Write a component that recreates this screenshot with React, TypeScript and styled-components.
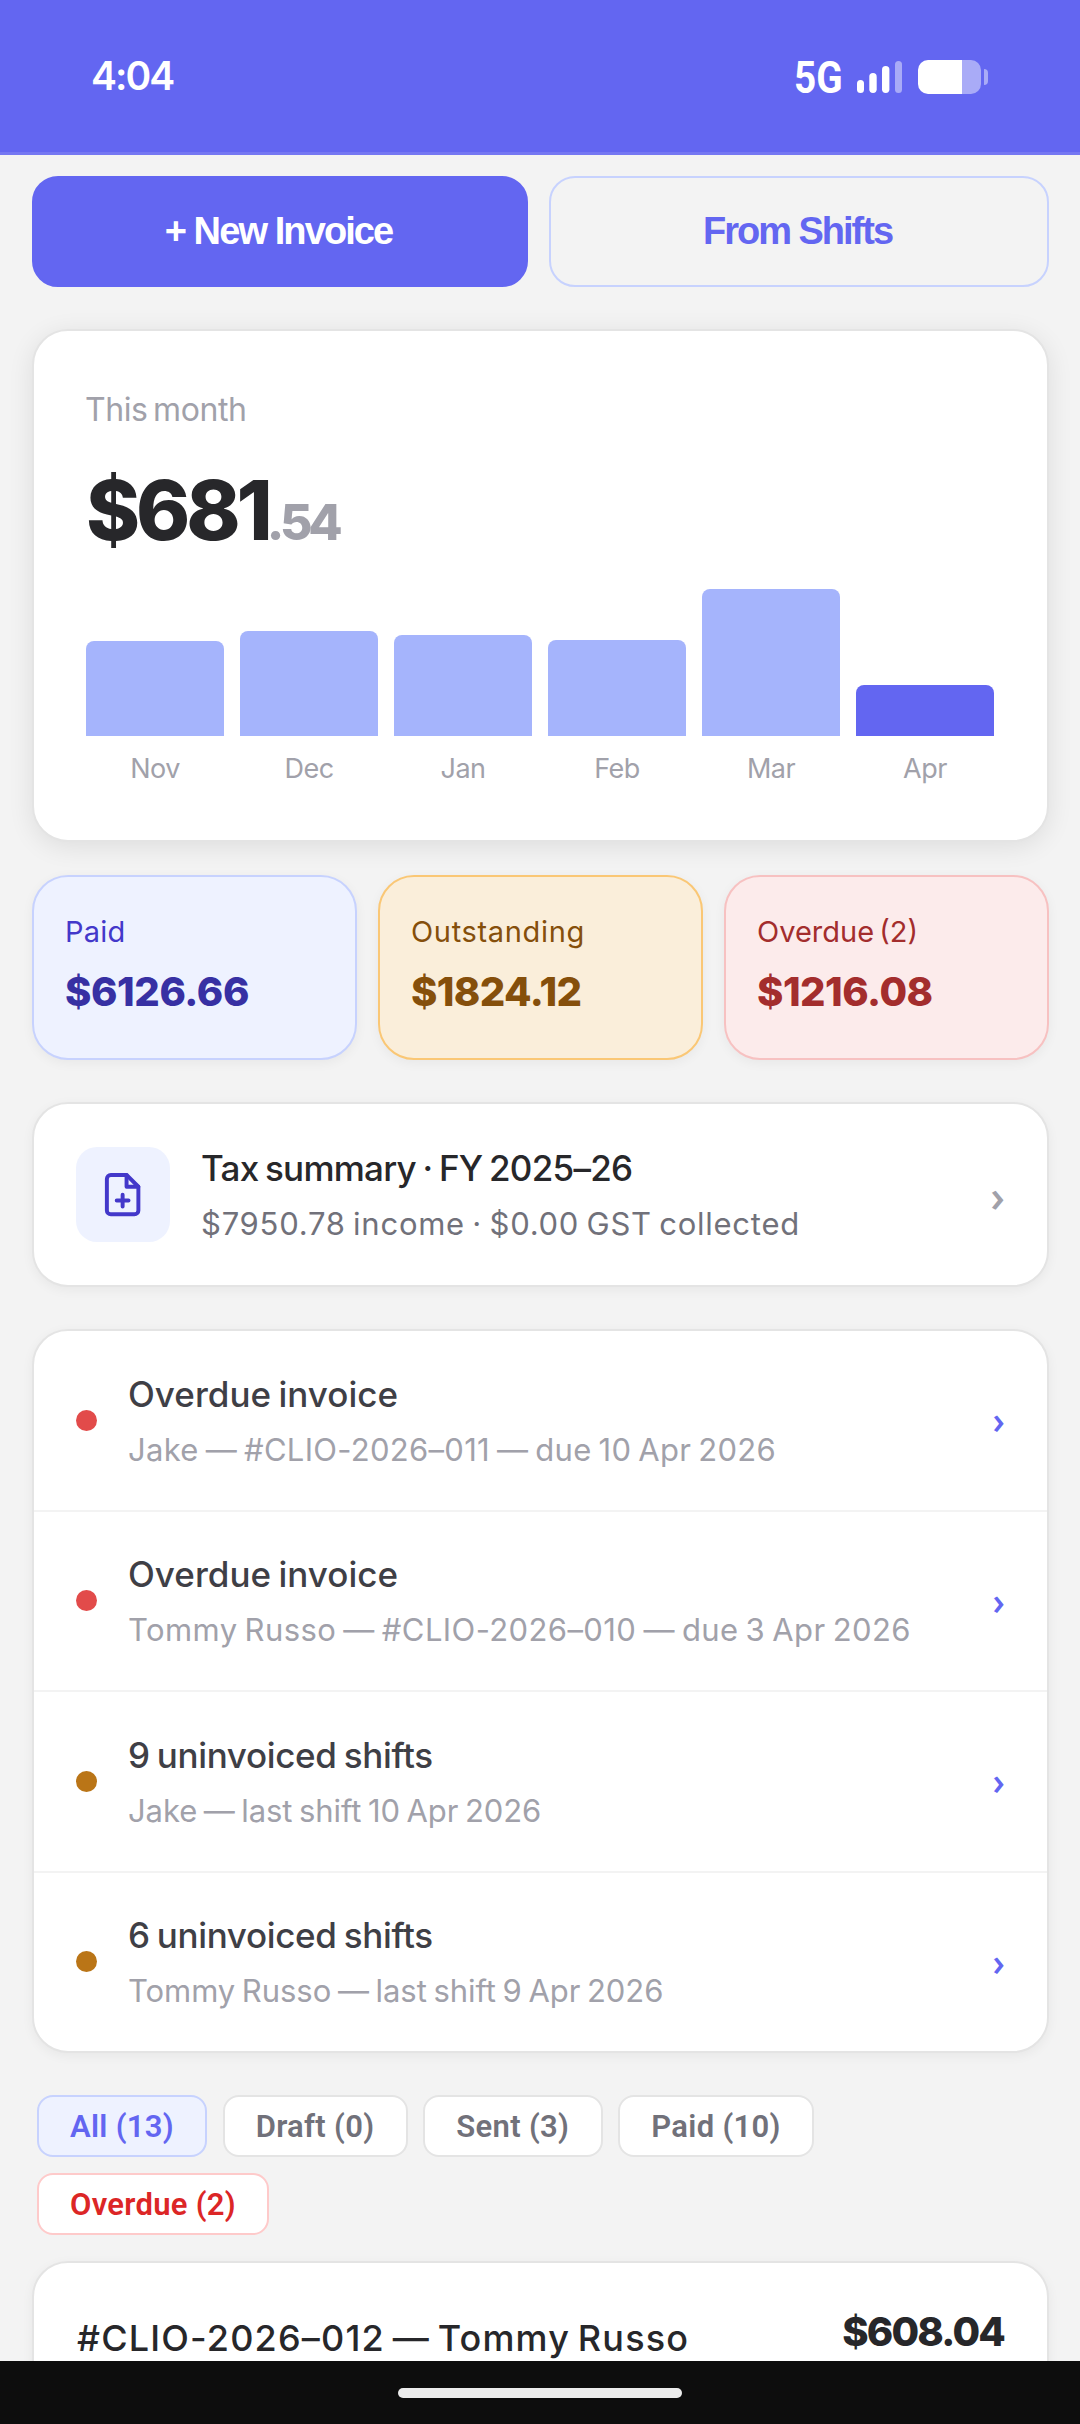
import React from 'react';
import styled, { createGlobalStyle } from 'styled-components';

const GlobalStyle = createGlobalStyle`
  * { box-sizing: border-box; }
  body {
    margin: 0;
    background: #f3f3f3;
    font-family: Inter, "Liberation Sans", sans-serif;
  }
`;

const Screen = styled.div`
  width: 1080px;
  height: 2424px;
  overflow: hidden;
  display: flex;
  flex-direction: column;
  background: #f3f3f3;
`;

/* Status bar */

const StatusBar = styled.header`
  flex: none;
  height: 155px;
  padding: 0 92px 0 91px;
  display: flex;
  align-items: center;
  justify-content: space-between;
  background: #6366f1;
  border-bottom: 3px solid #7577f2;
  color: #fff;
`;

const Clock = styled.div`
  font-size: 39px;
  font-weight: 600;
  line-height: 46px;
  letter-spacing: -2px;
`;

const StatusIcons = styled.div`
  display: flex;
  align-items: center;
  gap: 17px;
  padding-top: 2px;
`;

const Network = styled.span`
  width: 46px;
  padding-top: 2px;
  font-family: Roboto, sans-serif;
  font-size: 44px;
  font-weight: 700;
  line-height: 46px;
  white-space: nowrap;
  transform: scaleX(0.88);
  transform-origin: left center;
`;

/* Page content */

const Content = styled.main`
  flex: 1;
  min-height: 0;
  overflow: hidden;
  padding: 21px 31px 0 32px;
  display: flex;
  flex-direction: column;

  & > * { flex: none; }
`;

const Actions = styled.div`
  display: grid;
  grid-template-columns: 496px 500px;
  gap: 21px;
  height: 111px;
`;

const ActionButton = styled.button<{ $primary?: boolean; $track: number }>`
  border: 2px solid ${p => (p.$primary ? '#6366f1' : '#c7d2fe')};
  border-radius: 26px;
  background: ${p => (p.$primary ? '#6366f1' : 'transparent')};
  color: ${p => (p.$primary ? '#fff' : '#6366f1')};
  font-family: "Liberation Sans", Arial, sans-serif;
  font-size: 38px;
  font-weight: 700;
  line-height: 46px;
  letter-spacing: ${p => p.$track}px;
  padding: 0 3px 1px 0;
`;

const Card = styled.section`
  border: 2px solid #e4e4e4;
  border-radius: 36px;
  background: #fff;
  box-shadow: 0 3px 12px rgba(0, 0, 0, 0.05);
`;

const EarningsCard = styled(Card)`
  height: 513px;
  margin-top: 42px;
  padding: 59px 53px 0 52px;
  box-shadow: 0 5px 26px rgba(0, 0, 0, 0.09);
`;

const Period = styled.div`
  margin-left: -1px;
  font-size: 32px;
  line-height: 40px;
  letter-spacing: -0.43px;
  word-spacing: -3px;
  color: #a1a1aa;
`;

const Earnings = styled.div`
  margin-top: 30px;
  height: 100px;
  font-size: 82px;
  font-weight: 800;
  line-height: 102px;
  letter-spacing: -4.1px;
  color: #27272a;
`;

const Cents = styled.span`
  margin-left: -2px;
  font-size: 50px;
  letter-spacing: -4.2px;
  color: #a1a1aa;
`;

const Chart = styled.div`
  margin-top: 29px;
  display: grid;
  grid-template-columns: repeat(6, 138px);
  gap: 16px;
`;

const Month = styled.div`
  display: flex;
  flex-direction: column;
  align-items: center;
`;

const Track = styled.div`
  width: 100%;
  height: 147px;
  display: flex;
  align-items: flex-end;
`;

const Bar = styled.div<{ $current?: boolean }>`
  width: 100%;
  border-radius: 8px 8px 0 0;
  background: ${p => (p.$current ? '#6366f1' : '#a5b4fc')};
`;

const MonthName = styled.div`
  margin-top: 13px;
  font-size: 27px;
  line-height: 40px;
  letter-spacing: -0.5px;
  color: #a1a1aa;
`;

const Stats = styled.div`
  margin-top: 33px;
  display: grid;
  grid-template-columns: repeat(3, 325px);
  gap: 21px;
`;

type Tone = 'indigo' | 'amber' | 'red';
const tones: Record<Tone, { bg: string; border: string; label: string; value: string }> = {
  indigo: { bg: '#eef2ff', border: '#c7d2fe', label: '#4338ca', value: '#3730a3' },
  amber: { bg: '#faeeda', border: '#fac775', label: '#854f0b', value: '#854f0b' },
  red: { bg: '#fcebeb', border: '#f7c1c1', label: '#a32d2d', value: '#a32d2d' },
};

const Stat = styled.div<{ $tone: Tone }>`
  height: 185px;
  padding: 35px 0 0 31px;
  border: 2px solid ${p => tones[p.$tone].border};
  border-radius: 36px;
  background: ${p => tones[p.$tone].bg};
  box-shadow: 0 3px 12px rgba(0, 0, 0, 0.05);
`;

const StatLabel = styled.div<{ $tone: Tone; $track: number }>`
  font-size: 29px;
  line-height: 40px;
  letter-spacing: ${p => p.$track}px;
  word-spacing: -3px;
  color: ${p => tones[p.$tone].label};
`;

const StatValue = styled.div<{ $tone: Tone; $track: number }>`
  margin-top: 20px;
  font-size: 40px;
  font-weight: 800;
  line-height: 40px;
  letter-spacing: ${p => p.$track}px;
  color: ${p => tones[p.$tone].value};
`;

/* Rows shared by the tax summary and the reminders */

const TaxCard = styled(Card)`
  height: 185px;
  margin-top: 42px;
  padding: 0 42px;
  display: flex;
  align-items: center;
  gap: 31px;
`;

const IconTile = styled.div`
  width: 94px;
  height: 95px;
  border-radius: 21px;
  background: #eef2ff;
  display: flex;
  align-items: center;
  justify-content: center;
  color: #4338ca;
`;

const RowText = styled.div`
  flex: 1;
  padding-top: 3px;
  white-space: nowrap;
`;

const RowTitle = styled.div<{ $track: number; $strong?: boolean }>`
  font-size: 35px;
  font-weight: 500;
  line-height: 55px;
  letter-spacing: ${p => p.$track}px;
  word-spacing: -2px;
  color: ${p => (p.$strong ? '#27272a' : '#3f3f46')};
`;

const RowDetail = styled.div<{ $track: number; $strong?: boolean }>`
  font-size: 31px;
  line-height: 55px;
  letter-spacing: ${p => p.$track}px;
  word-spacing: -2px;
  color: ${p => (p.$strong ? '#71717a' : '#a1a1aa')};
`;

const Chevron = styled.span<{ $muted?: boolean }>`
  font-family: "Open Sans", sans-serif;
  font-size: ${p => (p.$muted ? 44 : 37)}px;
  font-weight: 600;
  line-height: 46px;
  color: ${p => (p.$muted ? '#a1a1aa' : '#6366f1')};
`;

const ReminderCard = styled(Card)`
  margin-top: 42px;
`;

const Reminder = styled.div`
  height: 180.5px;
  padding: 0 42px;
  display: flex;
  align-items: center;
  gap: 31px;
  border-bottom: 2px solid #f3f3f3;

  &:last-child {
    height: 178.5px;
    border-bottom: 0;
  }
`;

const Dot = styled.span<{ $color: string }>`
  width: 21px;
  height: 21px;
  border-radius: 50%;
  background: ${p => p.$color};
`;

/* Filters */

const Filters = styled.nav`
  margin-top: 42px;
  padding-left: 5px;
  width: 900px;
  display: flex;
  flex-wrap: wrap;
  gap: 16px 15.5px;
`;

const Pill = styled.button<{ $kind?: 'active' | 'alert'; $width: number }>`
  height: 62px;
  width: ${p => p.$width}px;
  padding: 1px 0 0;
  border: 2px solid ${p => (p.$kind === 'active' ? '#c7d2fe' : p.$kind === 'alert' ? '#fecaca' : '#e4e4e4')};
  border-radius: 16px;
  background: ${p => (p.$kind === 'active' ? '#eef2ff' : '#fff')};
  color: ${p => (p.$kind === 'active' ? '#6366f1' : p.$kind === 'alert' ? '#dc2626' : '#71717a')};
  font-family: Roboto, sans-serif;
  font-size: 31px;
  font-weight: 600;
  line-height: 40px;
  letter-spacing: 0.3px;
`;

const InvoiceCard = styled(Card)`
  margin-top: 26px;
  height: 240px;
  padding: 48px 43px 0 43px;
  display: flex;
  align-items: flex-start;
  justify-content: space-between;
`;

const InvoiceTitle = styled.div`
  font-size: 36px;
  font-weight: 500;
  line-height: 54px;
  letter-spacing: 1.18px;
  word-spacing: -3px;
  color: #27272a;
`;

const InvoiceAmount = styled.div`
  font-size: 40px;
  font-weight: 800;
  line-height: 42px;
  letter-spacing: -1.8px;
  color: #27272a;
`;

const HomeBar = styled.footer`
  flex: none;
  height: 63px;
  display: flex;
  align-items: center;
  justify-content: center;
  background: #0d0d0d;
`;

const HomeHandle = styled.div`
  width: 284px;
  height: 10px;
  border-radius: 5px;
  background: #ececec;
`;

const months = [
  { name: 'Nov', height: 95 },
  { name: 'Dec', height: 105 },
  { name: 'Jan', height: 101 },
  { name: 'Feb', height: 96 },
  { name: 'Mar', height: 147 },
  { name: 'Apr', height: 51, current: true },
];

const stats: { tone: Tone; label: string; value: string; lt: number; vt: number }[] = [
  { tone: 'indigo', label: 'Paid', value: '$6126.66', lt: 0.22, vt: -0.4 },
  { tone: 'amber', label: 'Outstanding', value: '$1824.12', lt: 0.67, vt: -0.6 },
  { tone: 'red', label: 'Overdue (2)', value: '$1216.08', lt: 0, vt: -0.5 },
];

const reminders = [
  { color: '#e24b4a', title: 'Overdue invoice', tt: 0.02, detail: 'Jake — #CLIO-2026–011 — due 10 Apr 2026', dt: 0.29 },
  { color: '#e24b4a', title: 'Overdue invoice', tt: 0.02, detail: 'Tommy Russo — #CLIO-2026–010 — due 3 Apr 2026', dt: 0.4 },
  { color: '#ba7517', title: '9 uninvoiced shifts', tt: -0.33, detail: 'Jake — last shift 10 Apr 2026', dt: -0.09 },
  { color: '#ba7517', title: '6 uninvoiced shifts', tt: -0.33, detail: 'Tommy Russo — last shift 9 Apr 2026', dt: -0.05 },
];

const SignalAndBattery = () => (
  <svg width="131" height="34" viewBox="0 0 131 34" fill="#fff">
    <rect x="0" y="20" width="7" height="13" rx="3.5" />
    <rect x="12.3" y="13" width="7.4" height="20" rx="3.7" />
    <rect x="25" y="6" width="7.4" height="27" rx="3.7" />
    <rect x="38" y="1" width="7" height="32" rx="3.5" opacity="0.45" />
    <path d="M105 0h9a10 10 0 0 1 10 10v14a10 10 0 0 1-10 10h-9z" opacity="0.45" />
    <path d="M71 0h34v34H71a10 10 0 0 1-10-10V10A10 10 0 0 1 71 0z" />
    <path d="M127 9a4 4 0 0 1 4 4v8a4 4 0 0 1-4 4z" opacity="0.45" />
  </svg>
);

const FilePlusIcon = () => (
  <svg width="47.25" height="47.25" viewBox="0 0 24 24" fill="none" stroke="currentColor" strokeWidth="2" strokeLinecap="round" strokeLinejoin="round">
    <path d="M14 2H6a2 2 0 0 0-2 2v16a2 2 0 0 0 2 2h12a2 2 0 0 0 2-2V8z" />
    <path d="M14 2v6h6" />
    <path d="M12 18v-6M9 15h6" />
  </svg>
);

export default function App() {
  return (
    <>
      <GlobalStyle />
      <Screen>
        <StatusBar>
          <Clock>4:04</Clock>
          <StatusIcons>
            <Network>5G</Network>
            <SignalAndBattery />
          </StatusIcons>
        </StatusBar>
        <Content>
          <Actions>
            <ActionButton $primary $track={-1.9}>+ New Invoice</ActionButton>
            <ActionButton $track={-2}>From Shifts</ActionButton>
          </Actions>

          <EarningsCard>
            <Period>This month</Period>
            <Earnings>$681<Cents>.54</Cents></Earnings>
            <Chart>
              {months.map(m => (
                <Month key={m.name}>
                  <Track>
                    <Bar $current={m.current} style={{ height: m.height }} />
                  </Track>
                  <MonthName>{m.name}</MonthName>
                </Month>
              ))}
            </Chart>
          </EarningsCard>

          <Stats>
            {stats.map(s => (
              <Stat key={s.tone} $tone={s.tone}>
                <StatLabel $tone={s.tone} $track={s.lt}>{s.label}</StatLabel>
                <StatValue $tone={s.tone} $track={s.vt}>{s.value}</StatValue>
              </Stat>
            ))}
          </Stats>

          <TaxCard>
            <IconTile><FilePlusIcon /></IconTile>
            <RowText>
              <RowTitle $strong $track={-0.75}>Tax summary · FY 2025–26</RowTitle>
              <RowDetail $strong $track={0.74}>$7950.78 income · $0.00 GST collected</RowDetail>
            </RowText>
            <Chevron $muted>›</Chevron>
          </TaxCard>

          <ReminderCard>
            {reminders.map(r => (
              <Reminder key={r.detail}>
                <Dot $color={r.color} />
                <RowText>
                  <RowTitle $track={r.tt}>{r.title}</RowTitle>
                  <RowDetail $track={r.dt}>{r.detail}</RowDetail>
                </RowText>
                <Chevron>›</Chevron>
              </Reminder>
            ))}
          </ReminderCard>

          <Filters>
            <Pill $kind="active" $width={170}>All (13)</Pill>
            <Pill $width={185}>Draft (0)</Pill>
            <Pill $width={179.5}>Sent (3)</Pill>
            <Pill $width={196}>Paid (10)</Pill>
            <Pill $kind="alert" $width={232}>Overdue (2)</Pill>
          </Filters>

          <InvoiceCard>
            <InvoiceTitle>#CLIO-2026–012 — Tommy Russo</InvoiceTitle>
            <InvoiceAmount>$608.04</InvoiceAmount>
          </InvoiceCard>
        </Content>
        <HomeBar><HomeHandle /></HomeBar>
      </Screen>
    </>
  );
}
